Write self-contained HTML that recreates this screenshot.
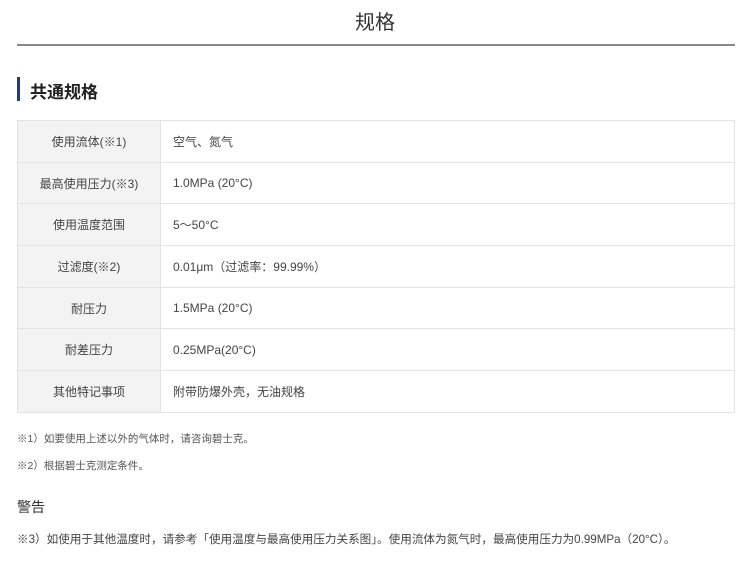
<!DOCTYPE html>
<html><head><meta charset="utf-8"><style>
body{margin:0;width:750px;height:571px;background:#fff;font-family:"Liberation Sans","Noto Sans CJK SC",sans-serif;color:#444;position:relative;overflow:hidden}
.a{position:absolute;white-space:nowrap}
table{position:absolute;left:17px;top:120px;width:718px;border-collapse:collapse;font-size:12px}
td{height:40.7px;border:1px solid #e3e3e3;padding:0;color:#444}
td.l{width:142px;background:#f3f3f3;text-align:center}
td.r{padding-left:12px}
</style></head><body>
<div class="a" style="left:0;width:750px;text-align:center;top:6px;font-size:20px;color:#333">规格</div>
<div class="a" style="left:17px;top:44px;width:718px;height:2px;background:#8a8a8a"></div>
<div class="a" style="left:17px;top:77px;width:3px;height:24px;background:#1d3f7a"></div>
<div class="a" style="left:30px;top:78px;font-size:17px;font-weight:bold;color:#222">共通规格</div>
<table>
<tr><td class="l">使用流体(※1)</td><td class="r">空气、氮气</td></tr>
<tr><td class="l">最高使用压力(※3)</td><td class="r">1.0MPa (20°C)</td></tr>
<tr><td class="l">使用温度范围</td><td class="r">5～50°C</td></tr>
<tr><td class="l">过滤度(※2)</td><td class="r">0.01μm（过滤率：99.99%）</td></tr>
<tr><td class="l">耐压力</td><td class="r">1.5MPa (20°C)</td></tr>
<tr><td class="l">耐差压力</td><td class="r">0.25MPa(20°C)</td></tr>
<tr><td class="l">其他特记事项</td><td class="r">附带防爆外壳，无油规格</td></tr>
</table>
<div class="a" style="left:17px;top:431px;font-size:10.5px;color:#555">※1）如要使用上述以外的气体时，请咨询碧士克。</div>
<div class="a" style="left:17px;top:458px;font-size:10.5px;color:#555">※2）根据碧士克测定条件。</div>
<div class="a" style="left:17px;top:497px;font-size:14px;color:#333">警告</div>
<div class="a" style="left:17px;top:531px;font-size:11.6px;color:#444">※3）如使用于其他温度时，请参考「使用温度与最高使用压力关系图」。使用流体为氮气时，最高使用压力为0.99MPa（20°C）。</div>
</body></html>
